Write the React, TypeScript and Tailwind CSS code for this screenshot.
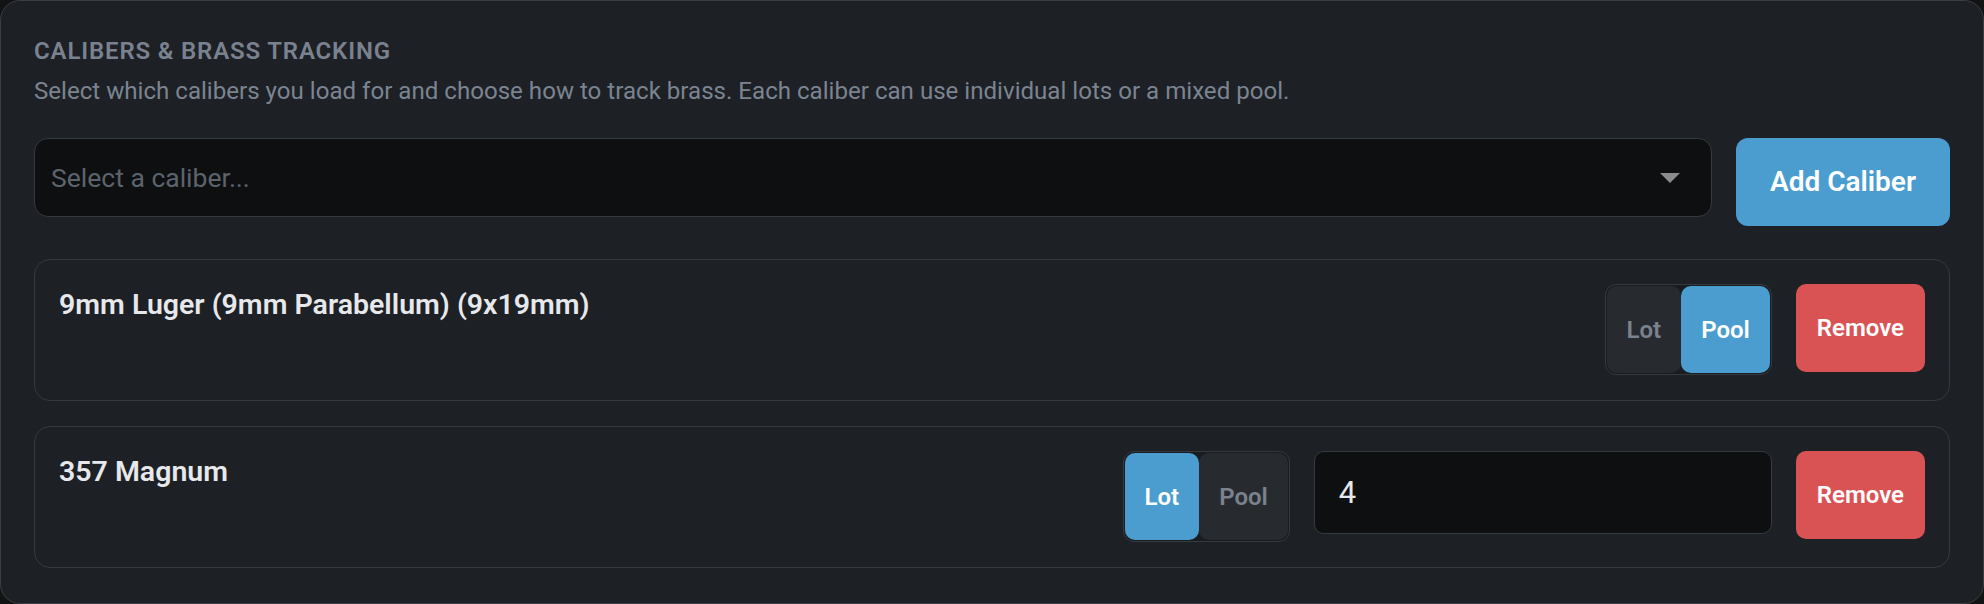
import { useState } from "react"

type TrackMode = "lot" | "pool"

interface CaliberRow {
  id: string
  name: string
  mode: TrackMode
  lot?: string
}

const INITIAL: CaliberRow[] = [
  { id: "9mm", name: "9mm Luger (9mm Parabellum) (9x19mm)", mode: "pool" },
  { id: "357", name: "357 Magnum", mode: "lot", lot: "4" },
]

function ModeToggle({
  mode,
  onChange,
}: {
  mode: TrackMode
  onChange: (m: TrackMode) => void
}) {
  const seg = (m: TrackMode, label: string) => (
    <button
      onClick={() => onChange(m)}
      className={
        mode === m
          ? "h-full rounded-[10px] bg-[#4a9dce] px-5 text-[24px] font-semibold text-white"
          : "h-full rounded-[10px] bg-[#272b30] px-5 text-[24px] font-semibold text-[#7a828e]"
      }
    >
      {label}
    </button>
  )
  return (
    <div className="flex h-[91px] rounded-[11px] border border-[#353940] bg-[#1a1d20] p-px">
      {seg("lot", "Lot")}
      {seg("pool", "Pool")}
    </div>
  )
}

function CaliberCard({
  row,
  onMode,
  onLot,
}: {
  row: CaliberRow
  onMode: (m: TrackMode) => void
  onLot: (v: string) => void
}) {
  return (
    <div className="flex h-[142px] items-start justify-between rounded-[16px] border border-[#353940] p-6">
      <div className="pt-[1px] text-[28.5px] font-semibold leading-[40px] text-[#e6e8eb]">
        {row.name}
      </div>
      <div className="flex items-start gap-6">
        <ModeToggle mode={row.mode} onChange={onMode} />
        {row.mode === "lot" && (
          <input
            value={row.lot ?? ""}
            onChange={(e) => onLot(e.target.value)}
            className="h-[83px] w-[458px] rounded-[10px] border border-[#353940] bg-[#0e0f11] px-6 text-[31px] text-[#e6e8eb] outline-none"
          />
        )}
        <button className="h-[88px] rounded-[10px] bg-[#d95354] px-[21px] text-[24px] font-semibold text-white">
          Remove
        </button>
      </div>
    </div>
  )
}

export default function App() {
  const [rows, setRows] = useState(INITIAL)

  const update = (id: string, patch: Partial<CaliberRow>) =>
    setRows((rs) => rs.map((r) => (r.id === id ? { ...r, ...patch } : r)))

  return (
    <div
      className="h-[604px] w-[1984px] bg-[#121315]"
      style={{ fontFamily: "Roboto, 'Liberation Sans', sans-serif" }}
    >
      <div className="h-full rounded-[20px] border border-[#3a3e44] bg-[#1d2024] px-[33px] pb-8 pt-[34px]">
        <h2 className="text-[24px] font-semibold uppercase leading-[32px] tracking-[0.035em] text-[#7a8290]">
          Calibers &amp; Brass Tracking
        </h2>
        <p className="mt-2 text-[24.1px] leading-[32px] text-[#7b8491]">
          Select which calibers you load for and choose how to track brass. Each caliber can use individual lots or a mixed pool.
        </p>

        <div className="mt-[31px] flex items-start gap-6">
          <div className="relative h-[79px] flex-1 rounded-[14px] border border-[#353940] bg-[#0e0f11]">
            <span className="absolute left-4 top-1/2 -translate-y-1/2 text-[26.5px] text-[#5c636d]">
              Select a caliber...
            </span>
            <svg
              className="absolute right-[31px] top-[34px]"
              width="20"
              height="10"
              viewBox="0 0 20 10"
            >
              <path d="M0 0h20L10 10z" fill="#8a8b8d" />
            </svg>
          </div>
          <button className="h-[88px] w-[214px] rounded-[12px] bg-[#4a9dce] text-[28px] font-semibold text-white">
            Add Caliber
          </button>
        </div>

        <div className="mt-[33px] flex flex-col gap-[25px]">
          {rows.map((row) => (
            <CaliberCard
              key={row.id}
              row={row}
              onMode={(m) => update(row.id, { mode: m })}
              onLot={(v) => update(row.id, { lot: v })}
            />
          ))}
        </div>
      </div>
    </div>
  )
}
